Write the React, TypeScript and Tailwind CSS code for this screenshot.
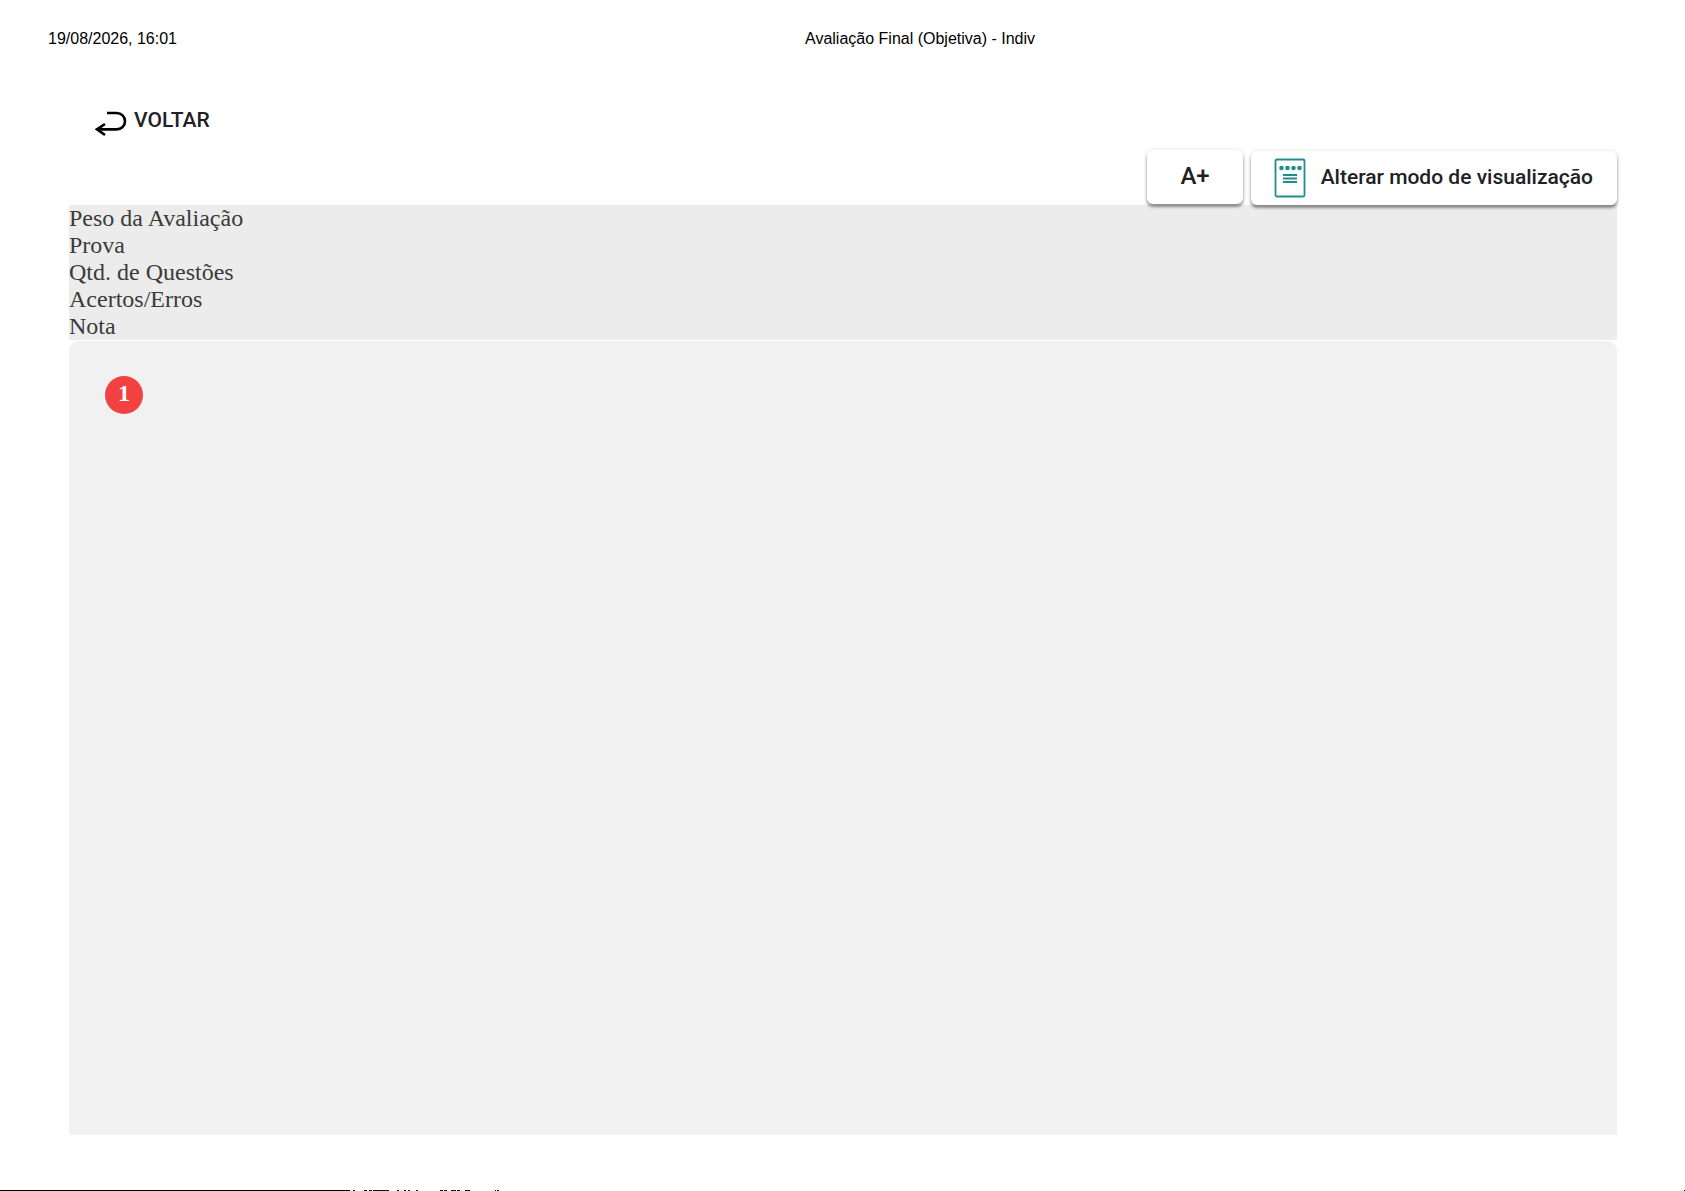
import type { ReactNode } from 'react'

const summary = ['Peso da Avaliação', 'Prova', 'Qtd. de Questões', 'Acertos/Erros', 'Nota']

function ReturnIcon() {
  return (
    <svg width="32" height="26" viewBox="0 0 32 26" fill="none" stroke="#000" strokeWidth="2.600" aria-hidden="true">
      <path d="M12 2h9.500c5 0 8.500 3.600 8.500 8.200s-3.500 8.200-8.500 8.200H2" />
      <path d="M10 13l-8 5.300 8 5.700" />
    </svg>
  )
}

function SheetIcon() {
  return (
    <svg width="32" height="40" viewBox="0 0 32 40" fill="none" stroke="#1f8f8d" aria-hidden="true">
      <rect x="1.500" y="1.500" width="29" height="37" rx="1.500" strokeWidth="1.800" />
      {[7.5, 13.500, 19.500, 25.500].map((cx) => (
        <circle key={cx} cx={cx} cy="10" r="2.300" fill="#1f8f8d" stroke="none" />
      ))}
      <path d="M9 17h14M9 20.500h14M9 24h14" strokeWidth="1.800" />
    </svg>
  )
}

// top pixels of the strip that continues below the page
function NextStrip() {
  return (
    <svg width="152" height="1" viewBox="0 0 152 1" fill="none" stroke="#111" aria-hidden="true">
      <path d="M3 .5h2M14 .5h3M19 .5h3M23 .5h16M47 .5h2M54 .5h2M58 .5h2M66 .5h2M90 .5h3M94 .5h3M101 .5h5M107 .5h3M115 .5h5M145 .5h1M147 .5h2" />
    </svg>
  )
}

function ToolButton({ className, children }: { className: string; children: ReactNode }) {
  return (
    <button
      type="button"
      className={`flex h-[54px] items-center rounded-md bg-white font-[Roboto,sans-serif] font-medium text-[#202124] shadow-[0_3px_3px_rgba(0,0,0,0.4),0_0_5px_rgba(0,0,0,0.12)] ${className}`}
    >
      {children}
    </button>
  )
}

export default function App() {
  return (
    <div className="flex h-screen flex-col overflow-hidden bg-white text-[#3b3b3b]">
      <header className="flex gap-1 pt-[29px] pl-12 font-['Liberation_Sans',sans-serif] text-base leading-5 text-black">
        <time className="w-[46%] shrink-0">19/08/2026, 16:01</time>
        <h1>Avaliação Final (Objetiva) - Indiv</h1>
      </header>

      <main className="mx-[68px] mt-[59px] flex min-h-0 flex-1 flex-col pl-px">
        <a
          href="#"
          className="ml-[26px] flex h-[26px] items-center gap-[7px] self-start font-[Roboto,sans-serif] text-[21px] font-medium text-[#202124]"
        >
          <span className="pt-[6px]">
            <ReturnIcon />
          </span>
          VOLTAR
        </a>

        <div className="relative mt-4 flex justify-end gap-2">
          <ToolButton className="px-[33px] pb-[2px] text-2xl">A+</ToolButton>
          <ToolButton className="mt-px gap-[15px] pr-6 pl-[23px] text-[21px]">
            <SheetIcon />
            Alterar modo de visualização
          </ToolButton>
        </div>

        <ul className="bg-[#ececec] font-['Liberation_Serif',serif] text-2xl leading-[27px]">
          {summary.map((label) => (
            <li key={label}>{label}</li>
          ))}
        </ul>

        <section className="mt-px min-h-0 flex-1 rounded-t-[10px] bg-[#f1f1f1] px-9 pt-[35px] font-['Liberation_Serif',serif]">
          <span className="flex size-[38px] items-center justify-center rounded-full bg-[#f14141] pb-1 text-2xl font-bold text-white">
            1
          </span>
        </section>
      </main>

      <footer className="mt-[55px] flex">
        <div className="h-px w-[350px] bg-black" />
        <NextStrip />
        <div className="ml-auto size-px bg-black" />
      </footer>
    </div>
  )
}
